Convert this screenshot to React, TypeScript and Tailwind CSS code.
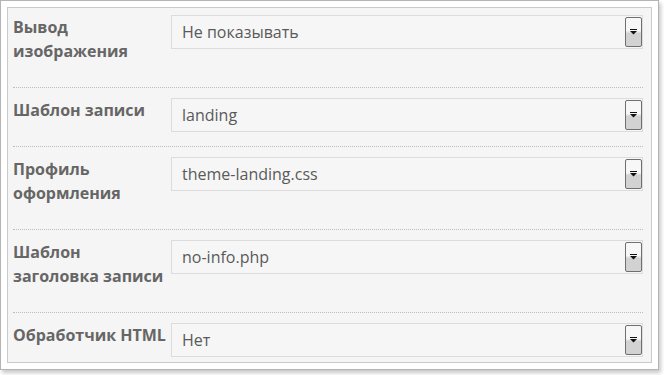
const rows = [
  { label: ['Вывод', 'изображения'], value: 'Не показывать' },
  { label: ['Шаблон записи'], value: 'landing' },
  { label: ['Профиль', 'оформления'], value: 'theme-landing.css' },
  { label: ['Шаблон', 'заголовка записи'], value: 'no-info.php' },
  { label: ['Обработчик HTML'], value: 'Нет' },
];

const SelectArrow = () => (
  <div className="absolute right-0 top-[1px] bottom-[1px] w-[17px] rounded-[2px] border border-[#6f6f6f] bg-gradient-to-b from-[#f7f7f7] from-45% to-[#d2d2d2] to-55% flex items-center justify-center">
    <svg width="7" height="6" viewBox="0 0 7 6">
      <rect x="0" y="0" width="7" height="1" fill="#111" />
      <path d="M0 2 H7 L3.5 5.5 Z" fill="#111" />
    </svg>
  </div>
);

export default function App() {
  return (
    <div className="w-[664px] h-[375px] bg-white" style={{ fontFamily: '"Open Sans", "Liberation Sans", sans-serif' }}>
      <div className="w-[659px] h-[370px] border border-[#b4b4b4] bg-white p-[6px] shadow-[2px_3px_4px_rgba(0,0,0,0.22)]">
        <div className="h-full border border-[#cacaca] bg-[#f5f5f5] pl-[5px] pr-[8px]">
          {rows.map((row, i) => {
            const first = i === 0;
            const last = i === rows.length - 1;
            return (
              <div
                key={i}
                className={`flex items-start ${first ? 'pt-[7px]' : 'pt-[10px]'} ${last ? 'pb-[6px]' : 'border-b border-dotted border-[#bdbdbd]'}`}
              >
                <div className={`w-[158px] shrink-0 text-[16px] leading-[24px] font-bold text-[#666] ${last ? '' : 'pb-[24px]'}`}>
                  {row.label.map((l, j) => (
                    <div key={j}>{l}</div>
                  ))}
                </div>
                <div className="relative flex-1 h-[34px] border border-[#dcdcdc] bg-[#f6f6f6] pl-[10px] flex items-center text-[16px] text-[#5a5a5a]">
                  {row.value}
                  <SelectArrow />
                </div>
              </div>
            );
          })}
        </div>
      </div>
    </div>
  );
}
